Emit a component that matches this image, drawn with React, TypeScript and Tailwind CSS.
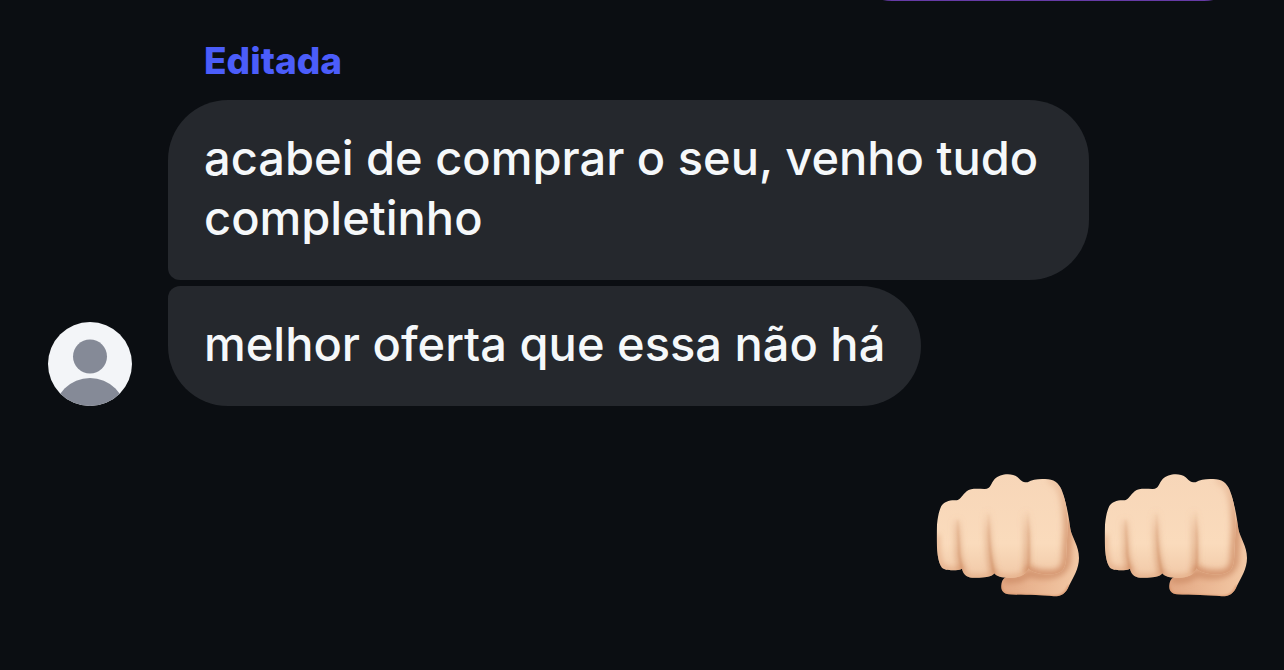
import type { ReactNode } from 'react';

interface BubbleProps {
  children: ReactNode;
  className?: string;
}

const reactions = ['first', 'second'];

function Bubble({ children, className = '' }: BubbleProps) {
  return (
    <p
      className={`w-fit max-w-[921px] bg-[#25282d] px-9 pt-7 pb-8 text-[47px] leading-[60px] font-[550] text-[#f5f8fa] ${className}`}
    >
      {children}
    </p>
  );
}

function Avatar() {
  return (
    <svg viewBox="0 0 84 84" className="size-[84px] shrink-0 rounded-full" role="img" aria-label="Avatar">
      <rect width="84" height="84" fill="#f3f5f8" />
      <circle cx="42" cy="34.5" r="17" fill="#858a97" />
      <circle cx="42" cy="92" r="36" fill="#858a97" />
    </svg>
  );
}

function Fist({ id }: { id: string }) {
  return (
    <svg viewBox="45 39 435 375" className="h-[125px] w-[145px]" role="img" aria-label="👊🏻">
      <defs>
        <linearGradient id={`${id}-skin`} x1="0" y1="0" x2="0" y2="1">
          <stop offset="0" stopColor="#f7d6b8" />
          <stop offset="0.65" stopColor="#fadbbc" />
          <stop offset="1" stopColor="#f0c7a5" />
        </linearGradient>
        <linearGradient id={`${id}-thumb`} x1="0" y1="0" x2="1" y2="0">
          <stop offset="0" stopColor="#e2a783" />
          <stop offset="0.5" stopColor="#ebb894" />
          <stop offset="1" stopColor="#f3c9a6" />
        </linearGradient>
        <filter id={`${id}-soft`} filterUnits="userSpaceOnUse" x="0" y="0" width="520" height="450">
          <feGaussianBlur stdDeviation="9" />
        </filter>
        <filter id={`${id}-fine`} filterUnits="userSpaceOnUse" x="0" y="0" width="520" height="450">
          <feGaussianBlur stdDeviation="3" />
        </filter>
        <linearGradient id={`${id}-crease`} gradientUnits="userSpaceOnUse" x1="0" y1="150" x2="0" y2="340">
          <stop offset="0" stopColor="#d09169" stopOpacity="0" />
          <stop offset="0.35" stopColor="#d09169" stopOpacity="0.5" />
          <stop offset="1" stopColor="#c98358" stopOpacity="0.75" />
        </linearGradient>
        <linearGradient id={`${id}-edge`} gradientUnits="userSpaceOnUse" x1="0" y1="58" x2="0" y2="345">
          <stop offset="0" stopColor="#d6966f" stopOpacity="0.25" />
          <stop offset="0.4" stopColor="#d08e66" stopOpacity="0.75" />
          <stop offset="1" stopColor="#cd865e" stopOpacity="0.85" />
        </linearGradient>
        <clipPath id={`${id}-hand`}>
          <path d="M50 225 C50 190 54 158 64 138 C72 124 92 119 111 121 C122 118 127 105 140 94 C151 84 172 86 193 87 C213 88 212 70 224 57 C239 41 275 37 292 51 C302 60 307 68 323 67 C338 57 362 56 384 58 C408 60 420 75 428 98 C438 124 443 160 443 205 L438 300 C435 333 420 344 385 343 C357 343 336 338 325 325 C319 345 299 353 270 354 C246 354 229 349 223 340 C216 350 196 354 170 353 C146 354 132 350 126 326 C112 333 74 332 66 323 C53 307 50 270 50 225Z" />
        </clipPath>
        <clipPath id={`${id}-palm`}>
          <path d="M425 96 C440 128 446 170 451 206 C456 235 477 255 477 294 C477 326 459 354 447 377 C437 401 422 410 401 409 C365 405 310 405 267 403 C250 402 243 391 244 376 C245 360 253 351 267 348 L320 310Z" />
        </clipPath>
      </defs>

      <g clipPath={`url(#${id}-palm)`}>
        <rect x="240" y="90" width="240" height="325" fill={`url(#${id}-thumb)`} />
        <path
          d="M250 358 C290 362 315 351 326 340 C385 356 430 347 441 306 L447 180"
          fill="none"
          stroke="#cb8963"
          strokeWidth="16"
          filter={`url(#${id}-soft)`}
        />
        <path
          d="M244 376 C243 397 253 404 270 404 L401 410 C427 412 440 394 447 377"
          fill="none"
          stroke="#d89268"
          strokeWidth="6"
          filter={`url(#${id}-fine)`}
        />
      </g>

      <g clipPath={`url(#${id}-hand)`}>
        <rect x="45" y="39" width="410" height="325" fill={`url(#${id}-skin)`} />
        <path
          d="M50 225 C50 270 53 307 66 323 C74 332 112 333 126 326 C132 350 146 354 170 353 C196 354 216 350 223 340 C229 349 246 354 270 354 C299 353 319 345 325 325"
          fill="none"
          stroke="#dfa37c"
          strokeWidth="12"
          filter={`url(#${id}-soft)`}
        />
        <path
          d="M325 325 C336 338 357 343 385 343 C420 344 435 333 438 300 L443 205 C443 160 438 124 428 98 C420 75 408 60 384 58"
          fill="none"
          stroke={`url(#${id}-edge)`}
          strokeWidth="24"
          filter={`url(#${id}-soft)`}
        />
        <g fill="none" stroke={`url(#${id}-crease)`} strokeWidth="16" filter={`url(#${id}-soft)`}>
          <path d="M111 180 L116 285 L125 335" />
          <path d="M203 150 C203 230 207 300 222 344" />
          <path d="M317 150 C322 220 323 280 321 340" />
        </g>
        <g fill="none" stroke={`url(#${id}-crease)`} strokeWidth="4" filter={`url(#${id}-fine)`}>
          <path d="M113 180 L118 285 L126 330" />
          <path d="M206 160 C206 240 212 305 223 342" />
          <path d="M323 150 C327 220 328 280 325 335" />
        </g>
      </g>
    </svg>
  );
}

export default function App() {
  return (
    <main className="flex min-h-screen flex-col bg-[#0b0e12] font-['Inter','Liberation_Sans',sans-serif]">
      <div className="flex h-px items-end justify-end overflow-hidden px-9">
        <div className="h-30 w-[400px] shrink-0 rounded-[44px] bg-[#663ba6]" />
      </div>

      <section className="flex items-end gap-9 px-12 pt-9">
        <Avatar />
        <div className="flex min-w-0 flex-col">
          <span className="mb-[15px] px-9 text-[37px] leading-[48px] font-extrabold text-[#4b5dfa]">Editada</span>
          <div className="flex flex-col gap-[6px]">
            <Bubble className="rounded-[60px] rounded-bl-xl">acabei de comprar o seu, venho tudo completinho</Bubble>
            <Bubble className="rounded-[60px] rounded-tl-xl">melhor oferta que essa não há</Bubble>
          </div>
        </div>
      </section>

      <section className="flex justify-end gap-[23px] px-9 pt-[67px]">
        {reactions.map((id) => (
          <Fist key={id} id={id} />
        ))}
      </section>
    </main>
  );
}
